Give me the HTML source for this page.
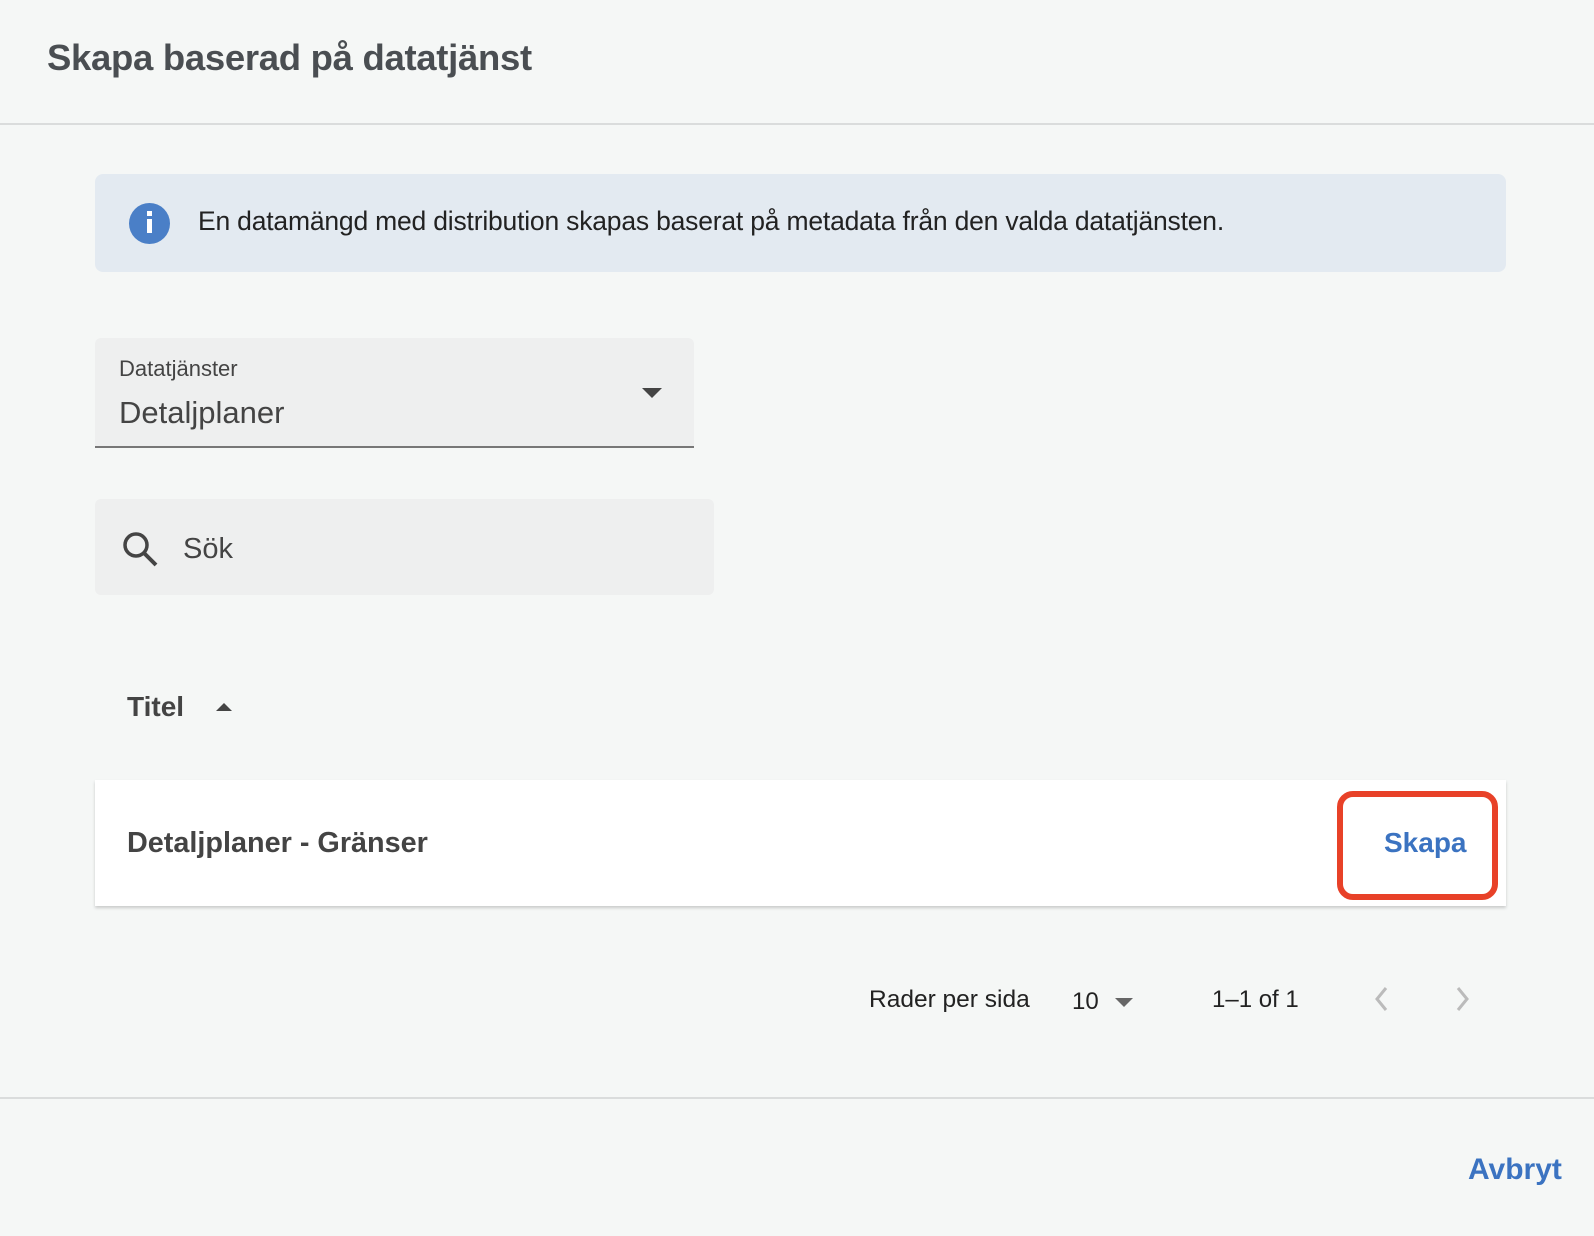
<!DOCTYPE html>
<html><head><meta charset="utf-8">
<style>
*{margin:0;padding:0;box-sizing:border-box}
html,body{width:1594px;height:1236px;overflow:hidden;background:#f5f7f6;font-family:"Liberation Sans",sans-serif;color:#333}
.abs{position:absolute}
.t{white-space:nowrap;line-height:1}
</style></head><body>
<div class="abs t" style="left:47px;top:40px;font-size:36.5px;font-weight:bold;color:#4a4e52;letter-spacing:-0.3px">Skapa baserad på datatjänst</div>
<div class="abs" style="left:0;top:123px;width:1594px;height:2px;background:#dadcdc"></div>

<div class="abs" style="left:95px;top:174px;width:1411px;height:98px;background:#e3eaf1;border-radius:8px"></div>
<div class="abs" style="left:129px;top:203px;width:41px;height:41px;border-radius:50%;background:#4a7fc7"></div>
<div class="abs" style="left:147px;top:211px;width:5px;height:5px;background:#fff"></div>
<div class="abs" style="left:147px;top:219px;width:5px;height:14px;background:#fff"></div>
<div class="abs t" style="left:198px;top:208px;font-size:26.5px;color:#222;letter-spacing:-0.2px">En datamängd med distribution skapas baserat på metadata från den valda datatjänsten.</div>

<div class="abs" style="left:95px;top:338px;width:599px;height:110px;background:#eeefef;border-radius:6px 6px 0 0;border-bottom:2px solid #777"></div>
<div class="abs t" style="left:119px;top:358px;font-size:22px;color:#444">Datatjänster</div>
<div class="abs t" style="left:119px;top:397px;font-size:31px;color:#444">Detaljplaner</div>
<div class="abs" style="left:642px;top:388px;width:0;height:0;border-left:10px solid transparent;border-right:10px solid transparent;border-top:10px solid #444"></div>

<div class="abs" style="left:95px;top:499px;width:619px;height:96px;background:#eeefef;border-radius:6px"></div>
<svg class="abs" style="left:121px;top:530px" width="40" height="40" viewBox="0 0 40 40"><circle cx="15" cy="15" r="11" fill="none" stroke="#444" stroke-width="3.5"/><line x1="23" y1="23" x2="35" y2="35" stroke="#444" stroke-width="4"/></svg>
<div class="abs t" style="left:183px;top:535px;font-size:29px;color:#444">Sök</div>

<div class="abs t" style="left:127px;top:693px;font-size:28px;font-weight:bold;color:#444">Titel</div>
<div class="abs" style="left:216px;top:703px;width:0;height:0;border-left:8px solid transparent;border-right:8px solid transparent;border-bottom:8px solid #444"></div>

<div class="abs" style="left:95px;top:780px;width:1411px;height:126px;background:#fff;box-shadow:0 2px 3px rgba(0,0,0,0.18)"></div>
<div class="abs t" style="left:127px;top:829px;font-size:28.8px;font-weight:bold;color:#444">Detaljplaner - Gränser</div>
<div class="abs" style="left:1337px;top:791px;width:161px;height:109px;border:6px solid #e84128;border-radius:16px"></div>
<div class="abs t" style="left:1384px;top:829px;font-size:28px;font-weight:bold;color:#3b73c1">Skapa</div>

<div class="abs t" style="left:869px;top:988px;font-size:24.5px;color:#222">Rader per sida</div>
<div class="abs t" style="left:1072px;top:990px;font-size:24px;color:#222">10</div>
<div class="abs" style="left:1115px;top:998px;width:0;height:0;border-left:9px solid transparent;border-right:9px solid transparent;border-top:9px solid #666"></div>
<div class="abs t" style="left:1212px;top:988px;font-size:24px;color:#222">1–1 of 1</div>
<svg class="abs" style="left:1372px;top:985px" width="20" height="28" viewBox="0 0 20 28"><polyline points="14,3 5,14 14,25" fill="none" stroke="#bbb" stroke-width="3"/></svg>
<svg class="abs" style="left:1452px;top:985px" width="20" height="28" viewBox="0 0 20 28"><polyline points="6,3 15,14 6,25" fill="none" stroke="#bbb" stroke-width="3"/></svg>

<div class="abs" style="left:0;top:1097px;width:1594px;height:2px;background:#dadcdc"></div>
<div class="abs t" style="left:1468px;top:1155px;font-size:30px;font-weight:bold;color:#3b73c1">Avbryt</div>
</body></html>
